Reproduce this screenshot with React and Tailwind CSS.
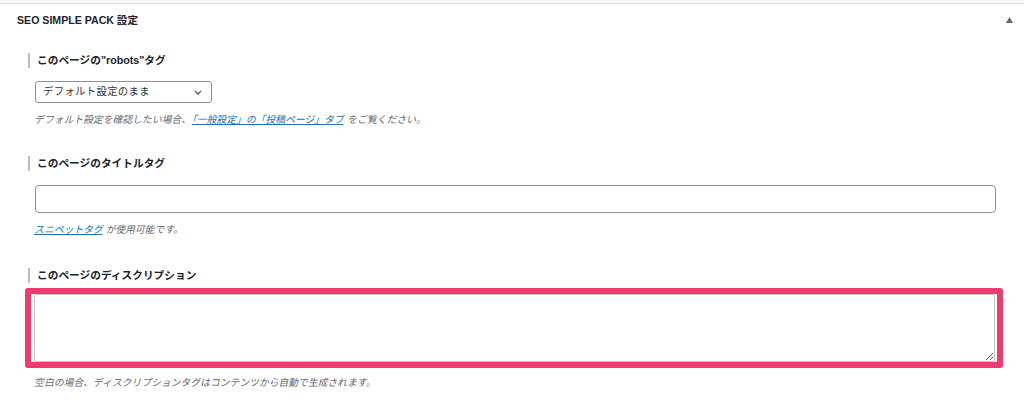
import React from "react";

const FONT = { fontFamily: '"Liberation Sans", "Noto Sans CJK JP", sans-serif' };

function Label({ children }) {
  return (
    <div className="border-l-2 border-[#b5c2b1] pl-[7px] h-[15px] flex items-center text-[10.7px] font-bold text-[#1d2327] leading-none">
      {children}
    </div>
  );
}

function Help({ children }) {
  return (
    <p className="ml-[7px] h-[14px] flex items-center text-[9.8px] text-[#646970] leading-none whitespace-nowrap">
      <span className="inline-block -skew-x-12">{children}</span>
    </p>
  );
}

export default function App() {
  return (
    <div className="w-[1024px] h-[415px] bg-white overflow-hidden" style={FONT}>
      {/* top strip */}
      <div className="h-[3px] bg-[#f6f7f7]" />
      <div className="border-t border-[#dcdcde]">
        {/* HEADER */}
        <div className="h-[32px] flex items-center justify-between pl-[17px] pr-[11px]">
          <h2 className="text-[10.6px] font-bold text-[#1d2327] leading-none">
            SEO SIMPLE PACK 設定
          </h2>
          <svg width="7" height="6" viewBox="0 0 7 6">
            <polygon points="3.5,0 7,6 0,6" fill="#646970" />
          </svg>
        </div>

        {/* BODY */}
        <div className="pl-[28px]">
          {/* robots */}
          <div className="mt-[17px]">
            <Label>このページの"robots"タグ</Label>
          </div>
          <div className="mt-[13px] ml-[7px] w-[177px] h-[22px] border border-[#8c8f94] rounded-[3px] flex items-center justify-between pl-[7px] pr-[9px]">
            <span className="text-[10.4px] text-[#2c3338] leading-none tracking-[0.3px]">デフォルト設定のまま</span>
            <svg width="8" height="5" viewBox="0 0 8 5">
              <polyline points="1,1 4,4 7,1" fill="none" stroke="#50575e" strokeWidth="1.3" />
            </svg>
          </div>
          <div className="mt-[10px]">
            <Help>
              デフォルト設定を確認したい場合、
              <a className="text-[#2271b1] underline mx-[1px]">「一般設定」の「投稿ページ」タブ</a>
              &nbsp;をご覧ください。
            </Help>
          </div>

          {/* title */}
          <div className="mt-[29px]">
            <Label>このページのタイトルタグ</Label>
          </div>
          <input
            className="block mt-[14px] ml-[7px] w-[961px] h-[28px] border border-[#8c8f94] rounded-[4px] bg-white outline-none"
            type="text"
          />
          <div className="mt-[10px]">
            <Help>
              <a className="text-[#2271b1] underline">スニペットタグ</a>
              &nbsp;が使用可能です。
            </Help>
          </div>

          {/* description */}
          <div className="mt-[31px]">
            <Label>このページのディスクリプション</Label>
          </div>
          <div className="mt-[5px] ml-[-3px] w-[978px] h-[80px] border-[6px] border-[#ef3a6d] rounded-[3px] pl-[3px] pr-[2px]">
            <textarea className="block w-full h-[68px] border border-[#c3c4c7] rounded-[2px] bg-white outline-none resize-y" />
          </div>
          <div className="mt-[8px]">
            <Help>空白の場合、ディスクリプションタグはコンテンツから自動で生成されます。</Help>
          </div>
        </div>
      </div>
    </div>
  );
}
